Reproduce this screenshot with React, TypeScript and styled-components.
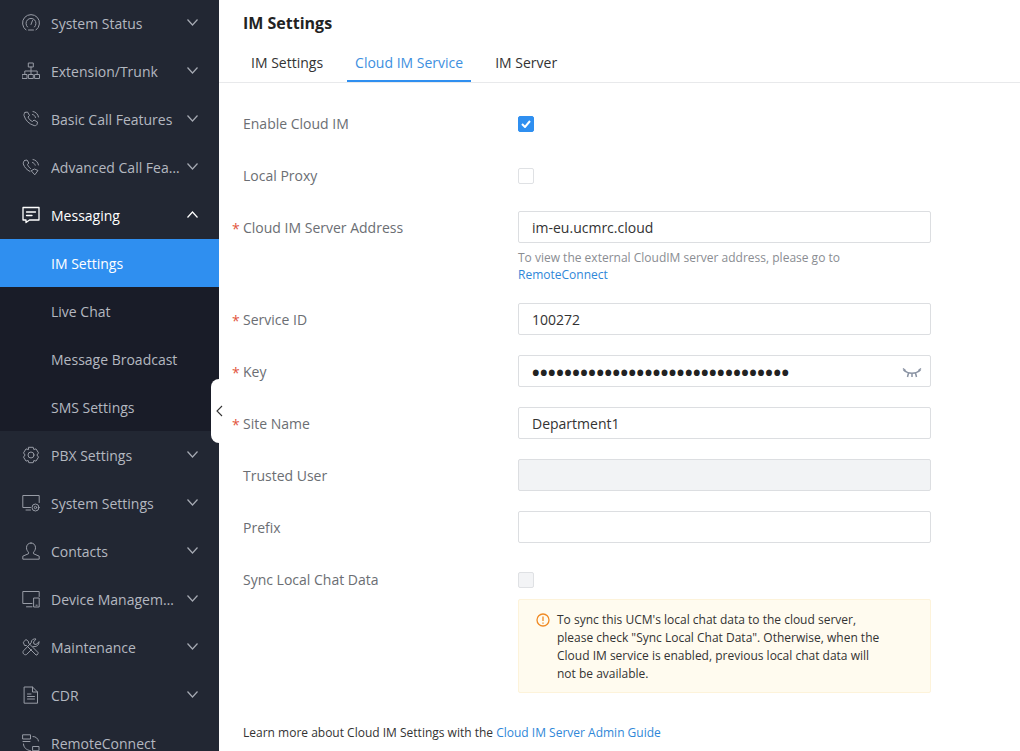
import styled, { createGlobalStyle } from 'styled-components';
import type { ReactNode } from 'react';

const GlobalStyle = createGlobalStyle`
    html, body {
        margin: 0;
        padding: 0;
        height: 100%;
        overflow: hidden;
        background: #fff;
    }
    * {
        box-sizing: border-box;
    }
    body {
        font-family: "Open Sans", "Noto Sans", sans-serif;
    }
`;

const Page = styled.div`
    display: flex;
    width: 1020px;
    height: 751px;
    overflow: hidden;
`;

const Sidebar = styled.nav`
    position: relative;
    flex: 0 0 219px;
    width: 219px;
    height: 751px;
    background: #222733;
`;

const MenuList = styled.div`
    height: 752px;
    margin-top: -1px;
    overflow: hidden;
`;

const MenuRow = styled.div<{ $open?: boolean }>`
    display: flex;
    align-items: center;
    height: 48px;
    padding: 0 21px 0 22px;
    font-size: 14px;
    color: ${(p) => (p.$open ? '#ffffff' : '#b4b8c0')};
    svg.icon {
        flex: 0 0 18px;
        width: 18px;
        height: 18px;
        margin-right: 11px;
        color: ${(p) => (p.$open ? '#ffffff' : '#989ca6')};
    }
`;

const MenuText = styled.span`
    flex: 1;
    min-width: 0;
    white-space: nowrap;
    overflow: hidden;
    text-overflow: ellipsis;
`;

const Caret = styled.svg`
    flex: 0 0 11px;
    width: 11px;
    height: 7px;
    margin: -2px 0 0 7px;
`;

const SubMenu = styled.div`
    background: #191c28;
`;

const SubRow = styled.div<{ $active?: boolean }>`
    display: flex;
    align-items: center;
    height: 48px;
    padding-left: 51px;
    font-size: 14px;
    color: ${(p) => (p.$active ? '#ffffff' : '#b4b8c0')};
    background: ${(p) => (p.$active ? '#2f8ff0' : 'transparent')};
`;

const CollapseHandle = styled.div`
    position: absolute;
    top: 379px;
    left: 211px;
    width: 16px;
    height: 64px;
    border-radius: 8px;
    background: #fff;
    display: flex;
    align-items: center;
    justify-content: center;
    z-index: 2;
`;

const Main = styled.main`
    flex: 1;
    min-width: 0;
    color: #333;
`;

const Title = styled.h1`
    margin: 0;
    padding: 12px 24px 0;
    height: 43px;
    font-size: 16px;
    line-height: 23px;
    font-weight: 700;
    color: #222;
`;

const Tabs = styled.div`
    display: flex;
    height: 40px;
    padding-left: 24px;
    gap: 16px;
    border-bottom: 1px solid #e8e9eb;
`;

const Tab = styled.div<{ $active?: boolean }>`
    height: 39px;
    padding: 0 8px;
    font-size: 14px;
    line-height: 39px;
    color: ${(p) => (p.$active ? '#3d8fe0' : '#333')};
    border-bottom: 2px solid ${(p) => (p.$active ? '#2f8ff0' : 'transparent')};
`;

const Form = styled.div`
    padding: 25px 24px 0;
`;

const FieldRow = styled.div`
    display: flex;
    margin-bottom: 20px;
`;

const Label = styled.div<{ $required?: boolean }>`
    position: relative;
    flex: 0 0 275px;
    font-size: 14px;
    line-height: 32px;
    color: #6b6e73;
    &::before {
        content: ${(p) => (p.$required ? "'*'" : 'none')};
        position: absolute;
        left: -11px;
        top: 1px;
        color: #e2553d;
        font-size: 14px;
    }
`;

const Control = styled.div`
    position: relative;
    width: 413px;
`;

const CheckWrap = styled.div`
    display: flex;
    align-items: center;
    height: 32px;
`;

const CheckBox = styled.div<{ $checked?: boolean; $disabled?: boolean }>`
    display: flex;
    align-items: center;
    justify-content: center;
    width: 16px;
    height: 16px;
    border-radius: 2px;
    border: 1px solid ${(p) => (p.$checked ? '#2f8ff0' : '#dfe1e4')};
    background: ${(p) => (p.$checked ? '#2f8ff0' : p.$disabled ? '#f3f4f6' : '#fff')};
`;

const TextInput = styled.div<{ $disabled?: boolean }>`
    height: 32px;
    margin: -1px 0 1px;
    padding: 0 13px;
    border: 1px solid #dcdee1;
    border-radius: 2px;
    font-size: 14px;
    line-height: 32px;
    color: #333;
    white-space: nowrap;
    background: ${(p) => (p.$disabled ? '#f2f3f5' : '#fff')};
`;

const Dots = styled.span`
    margin-left: -1.5px;
    font-size: 28px;
    letter-spacing: -2.48px;
    line-height: 0;
    vertical-align: -6px;
    color: #222;
`;

const EyeToggle = styled.svg`
    position: absolute;
    right: 9px;
    top: 11px;
    width: 20px;
    height: 11px;
`;

const Help = styled.div`
    margin-top: 6px;
    margin-bottom: 1px;
    font-size: 12px;
    line-height: 17px;
    color: #8a8d92;
`;

const HelpLink = styled.a`
    color: #2f87d8;
`;

const Notice = styled.div`
    display: flex;
    width: 413px;
    height: 94px;
    margin: -17px 0 0 275px;
    padding: 11px 17px;
    background: #fffbef;
    border: 1px solid #fdf3da;
    border-radius: 2px;
    font-size: 12px;
    line-height: 18px;
    color: #333;
    svg {
        flex: 0 0 14px;
        width: 14px;
        height: 14px;
        margin: 2px 7px 0 0;
    }
`;

const NoticeText = styled.div`
    width: 330px;
`;

const Footer = styled.div`
    margin-top: 31px;
    font-size: 12px;
    line-height: 18px;
    color: #333;
`;

const FooterLink = styled.a`
    color: #2f87d8;
`;

const Icon = ({ children }: { children: ReactNode }) => (
    <svg className="icon" viewBox="0 0 18 18" fill="none" stroke="currentColor" strokeWidth="1" strokeLinecap="round" strokeLinejoin="round">
        {children}
    </svg>
);

const DownCaret = ({ up }: { up?: boolean }) => (
    <Caret viewBox="0 0 11 7" fill="none" stroke={up ? '#fff' : '#a6aab3'} strokeWidth="1.2">
        <path d={up ? 'M.5 6.500l5-5.500 5 5.500' : 'M.5.500l5 5.500 5-5.500'} />
    </Caret>
);

const topItems = [
    {
        name: 'System Status',
        icon: (
            <>
                <path d="M4 16a8.500 8.500 0 1 1 10 0" />
                <path d="M5.500 13a5 5 0 1 1 7 0" />
                <path d="M9 10.500l1.500-4" />
                <path d="M6.500 16h5" />
            </>
        ),
    },
    {
        name: 'Extension/Trunk',
        icon: (
            <>
                <rect x="6.700" y="1" width="4.600" height="4" />
                <rect x="0.500" y="12.500" width="4.500" height="4" />
                <rect x="6.800" y="12.500" width="4.500" height="4" />
                <rect x="13" y="12.500" width="4.500" height="4" />
                <path d="M9 5v7.500M2.800 12.500V9h12.400v3.500" />
            </>
        ),
    },
    {
        name: 'Basic Call Features',
        icon: (
            <>
                <path d="M3 2.500l2.500-.5 2 3.500-1.500 1.500c.8 2 2.500 3.800 4.500 4.500l1.500-1.500 3.500 2-.5 2.500c-.5 1-2 1.500-3 1-5-1.500-8.500-5-10-10-.2-1 .4-2.500 1-3z" />
                <path d="M10.500 4.500c1.500.3 2.700 1.500 3 3M11 1.500c2.800.4 5 2.600 5.500 5.500" />
            </>
        ),
    },
    {
        name: 'Advanced Call Features',
        icon: (
            <>
                <path d="M2.500 2.500l2.500-.5 1.800 3-1.300 1.500c.6 1.600 1.600 3 3 4M8 13.500C5 12 2.500 9.500 1.300 6c-.3-1 .4-2.800 1.200-3.500" />
                <path d="M10.500 4.500c1.300.3 2.300 1.300 2.700 2.700M11 1.500c2.800.4 5 2.600 5.500 5.500" />
                <path d="M9.500 12.500l3-1.500 3.500 1.500-3 4z" />
            </>
        ),
    },
];

const bottomItems = [
    {
        name: 'PBX Settings',
        icon: (
            <>
                <path d="M6.800 1.300h4.400l.6 2.200 2.200-.6 2.500 4-1.600 2.100 1.600 2.100-2.500 4-2.200-.6-.6 2.200H6.800l-.6-2.200-2.200.6-2.500-4L3.100 9 1.500 6.900 4 2.900l2.200.6z" />
                <circle cx="9" cy="9" r="3" />
            </>
        ),
    },
    {
        name: 'System Settings',
        icon: (
            <>
                <path d="M8.500 13.500H.8V1.500h16.400v7" />
                <path d="M4 16h4.500" />
                <circle cx="13.500" cy="13.500" r="3.500" />
                <circle cx="13.500" cy="13.500" r="1.200" />
            </>
        ),
    },
    {
        name: 'Contacts',
        icon: (
            <>
                <path d="M9 1c-2.800 0-4.500 2-4.500 4.800 0 1.800.9 3.400 2 4.400v1.500L.8 14.200v3h16.400v-3l-5.700-2.500v-1.500c1.100-1 2-2.600 2-4.400C13.500 3 11.800 1 9 1z" />
            </>
        ),
    },
    {
        name: 'Device Management',
        icon: (
            <>
                <path d="M10 13.500H.8V1.500h16.400v5" />
                <path d="M4.500 16.800H10" />
                <rect x="12" y="8" width="5.200" height="9" />
                <path d="M14 15.200h1.200" />
            </>
        ),
    },
    {
        name: 'Maintenance',
        icon: (
            <>
                <path d="M1.500 4l2.500-2.500 2.500 2v1.500l9.500 9.500v1L15 17h-1L4.500 7.500H3z" />
                <path d="M17 4l-3 2.500-2-.5-.5-2 2.500-3c-2.200-.6-5 .8-4.800 3.800L1.500 12.800c-.8.800-.7 2.200.2 3.200s2.400 1 3.200.2L9.500 11.500M11 8.500c3 .8 6.300-1.200 6-4.500" />
            </>
        ),
    },
    {
        name: 'CDR',
        icon: (
            <>
                <path d="M2.500 1h8l5 5v11.200h-13z" />
                <path d="M10.500 1v5h5M5.500 8h3.500M5.500 10.500h7M5.500 13h7" />
            </>
        ),
    },
    {
        name: 'RemoteConnect',
        icon: (
            <>
                <rect x="1" y="0.800" width="7.500" height="4.200" />
                <path d="M1 7.500h7" />
                <rect x="11" y="12.500" width="6" height="4.200" />
                <path d="M11 2.500c2.800 0 5 2 5.500 4.500M1.500 10c.2 3.500 2.500 6 7 6.700" />
            </>
        ),
    },
];

const App = () => {
    return (
        <Page>
            <GlobalStyle />
            <Sidebar>
                <MenuList>
                    {topItems.map((item) => (
                        <MenuRow key={item.name}>
                            <Icon>{item.icon}</Icon>
                            <MenuText>{item.name}</MenuText>
                            <DownCaret />
                        </MenuRow>
                    ))}
                    <MenuRow $open>
                        <Icon>
                            <path d="M1 1.500h16v12.500H7.500l-3.500 2.500v-2.500H1z" strokeWidth="1.300" />
                            <path d="M4.500 6h9M4.500 9.500h5.500" strokeWidth="1.300" />
                        </Icon>
                        <MenuText>Messaging</MenuText>
                        <DownCaret up />
                    </MenuRow>
                    <SubMenu>
                        <SubRow $active>IM Settings</SubRow>
                        <SubRow>Live Chat</SubRow>
                        <SubRow>Message Broadcast</SubRow>
                        <SubRow>SMS Settings</SubRow>
                    </SubMenu>
                    {bottomItems.map((item) => (
                        <MenuRow key={item.name}>
                            <Icon>{item.icon}</Icon>
                            <MenuText>{item.name}</MenuText>
                            {item.name !== 'RemoteConnect' && <DownCaret />}
                        </MenuRow>
                    ))}
                </MenuList>
                <CollapseHandle>
                    <svg width="7" height="12" viewBox="0 0 7 12" fill="none" stroke="#333" strokeWidth="1.100">
                        <path d="M6 1L1 6l5 5" />
                    </svg>
                </CollapseHandle>
            </Sidebar>
            <Main>
                <Title>IM Settings</Title>
                <Tabs>
                    <Tab>IM Settings</Tab>
                    <Tab $active>Cloud IM Service</Tab>
                    <Tab>IM Server</Tab>
                </Tabs>
                <Form>
                    <FieldRow>
                        <Label>Enable Cloud IM</Label>
                        <Control>
                            <CheckWrap>
                                <CheckBox $checked>
                                    <svg width="10" height="8" viewBox="0 0 10 8" fill="none" stroke="#fff" strokeWidth="2">
                                        <path d="M1 4l3 3 5-6" />
                                    </svg>
                                </CheckBox>
                            </CheckWrap>
                        </Control>
                    </FieldRow>
                    <FieldRow>
                        <Label>Local Proxy</Label>
                        <Control>
                            <CheckWrap>
                                <CheckBox />
                            </CheckWrap>
                        </Control>
                    </FieldRow>
                    <FieldRow>
                        <Label $required>Cloud IM Server Address</Label>
                        <Control>
                            <TextInput>im-eu.ucmrc.cloud</TextInput>
                            <Help>
                                To view the external CloudIM server address, please go to
                                <br />
                                <HelpLink>RemoteConnect</HelpLink>
                            </Help>
                        </Control>
                    </FieldRow>
                    <FieldRow>
                        <Label $required>Service ID</Label>
                        <Control>
                            <TextInput>100272</TextInput>
                        </Control>
                    </FieldRow>
                    <FieldRow>
                        <Label $required>Key</Label>
                        <Control>
                            <TextInput>
                                <Dots>••••••••••••••••••••••••••••••••</Dots>
                            </TextInput>
                            <EyeToggle viewBox="0 0 20 11" fill="none" stroke="#8a93a3" strokeWidth="1.500">
                                <path d="M1.500 3c2.500 2.300 5 3.200 8.500 3.200S16 5.300 18.500 3M1 1.500l2.500 2M19 1.500l-2.500 2M6.500 6l-1 4M13.500 6l1 4M10 6.500V10" />
                            </EyeToggle>
                        </Control>
                    </FieldRow>
                    <FieldRow>
                        <Label $required>Site Name</Label>
                        <Control>
                            <TextInput>Department1</TextInput>
                        </Control>
                    </FieldRow>
                    <FieldRow>
                        <Label>Trusted User</Label>
                        <Control>
                            <TextInput $disabled />
                        </Control>
                    </FieldRow>
                    <FieldRow>
                        <Label>Prefix</Label>
                        <Control>
                            <TextInput />
                        </Control>
                    </FieldRow>
                    <FieldRow>
                        <Label>Sync Local Chat Data</Label>
                        <Control>
                            <CheckWrap>
                                <CheckBox $disabled />
                            </CheckWrap>
                        </Control>
                    </FieldRow>
                    <Notice>
                        <svg viewBox="0 0 14 14" fill="none" stroke="#f08a24" strokeWidth="1.300">
                            <circle cx="7" cy="7" r="6" />
                            <path d="M7 3.500v4.500M7 9.500v1.300" />
                        </svg>
                        <NoticeText>
                            To sync this UCM's local chat data to the cloud server, please check "Sync Local Chat Data". Otherwise, when the Cloud IM service is enabled, previous local chat data will not be available.
                        </NoticeText>
                    </Notice>
                    <Footer>
                        Learn more about Cloud IM Settings with the <FooterLink>Cloud IM Server Admin Guide</FooterLink>
                    </Footer>
                </Form>
            </Main>
        </Page>
    );
};

export default App;
